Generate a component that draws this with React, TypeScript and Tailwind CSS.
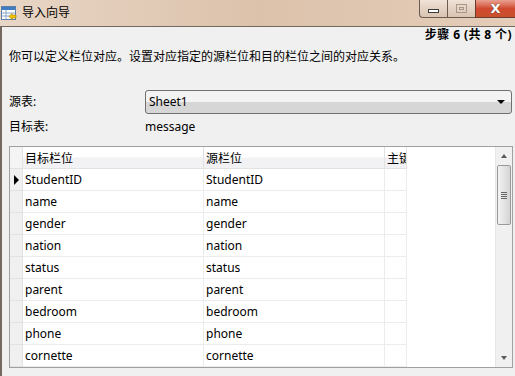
import React from "react";

const rows = [
  "StudentID",
  "name",
  "gender",
  "nation",
  "status",
  "parent",
  "bedroom",
  "phone",
  "cornette",
];

function WizardIcon() {
  return (
    <svg width="16" height="16" viewBox="0 0 16 16" className="shrink-0">
      <rect x="0.5" y="1.5" width="14" height="13" fill="#ffffff" stroke="#5b7ea8" />
      <rect x="1" y="2" width="13" height="3" fill="#3f7cc4" />
      <line x1="1" y1="8" x2="14" y2="8" stroke="#8aa6c8" />
      <line x1="1" y1="11" x2="14" y2="11" stroke="#8aa6c8" />
      <line x1="5" y1="5" x2="5" y2="14" stroke="#8aa6c8" />
      <path d="M8 11.5 L11 8.5 L11 10 L15 10 L15 13 L11 13 L11 14.5 Z" fill="#f2c200" stroke="#a07800" strokeWidth="0.6" />
    </svg>
  );
}

function TitleBar() {
  return (
    <div className="relative flex h-[26px] items-center bg-gradient-to-r from-[#e8d6c6] via-[#dcc2ab] to-[#e4cdb9] pl-[1px]">
      <WizardIcon />
      <span className="ml-[5px] text-[12px] leading-[16px] text-black">导入向导</span>
      <div className="absolute right-0 top-0 flex h-[18px]">
        <div className="flex w-[28px] items-center justify-center rounded-bl-[4px] border border-t-0 border-r-0 border-[#6b5a4e] bg-gradient-to-b from-[#efe2d6] to-[#d9c3b1]">
          <div className="mt-[4px] h-[4px] w-[11px] border border-[#3a3a3a] bg-white"></div>
        </div>
        <div className="flex w-[28px] items-center justify-center border-b border-l border-[#6b5a4e] bg-gradient-to-b from-[#efe2d6] to-[#d9c3b1]">
          <div className="flex h-[9px] w-[11px] items-center justify-center border border-[#a89888]">
            <div className="h-[3px] w-[5px] border border-[#a89888]"></div>
          </div>
        </div>
        <div className="flex w-[40px] items-center justify-center border-b border-l border-[#6b3a30] bg-gradient-to-b from-[#e8a090] via-[#d04a30] to-[#c8502c]">
          <span className="text-[13px] font-bold leading-none text-white [text-shadow:0_0_1px_#333]" style={{ fontFamily: '"DejaVu Sans", sans-serif' }}>
            X
          </span>
        </div>
      </div>
    </div>
  );
}

function Scrollbar() {
  return (
    <div className="flex w-[17px] flex-col border-l border-[#e6e6e6] bg-[#f0f0f0]">
      <div className="flex h-[18px] items-center justify-center">
        <div className="h-0 w-0 border-x-[3px] border-b-[4px] border-x-transparent border-b-[#5a5a5a]"></div>
      </div>
      <div className="mx-[1px] flex h-[60px] items-center justify-center rounded-[2px] border border-[#9a9a9a] bg-gradient-to-r from-[#f2f2f2] via-[#e4e4e4] to-[#d4d4d4]">
        <div className="flex flex-col gap-[1px]">
          <div className="h-[1px] w-[6px] bg-[#666]"></div>
          <div className="h-[1px] w-[6px] bg-[#666]"></div>
          <div className="h-[1px] w-[6px] bg-[#666]"></div>
          <div className="h-[1px] w-[6px] bg-[#666]"></div>
        </div>
      </div>
      <div className="flex-1"></div>
      <div className="flex h-[18px] items-center justify-center">
        <div className="h-0 w-0 border-x-[3px] border-t-[4px] border-x-transparent border-t-[#5a5a5a]"></div>
      </div>
    </div>
  );
}

function Grid() {
  return (
    <div className="mt-[11px] flex h-[222px] w-[504px] border border-[#a0a0a0] bg-white">
      <div className="flex flex-1 flex-col">
        <div className="flex h-[22px]">
          <div className="w-[13px] border-b border-r border-[#e2e2e2] bg-[#f4f4f4]"></div>
          <div className="flex w-[181px] items-center border-b border-r border-[#e2e2e2] bg-gradient-to-b from-white from-45% to-[#f2f2f4] to-55% pl-[2px] pt-[2px]">目标栏位</div>
          <div className="flex w-[181px] items-center border-b border-r border-[#e2e2e2] bg-gradient-to-b from-white from-45% to-[#f2f2f4] to-55% pl-[2px] pt-[2px]">源栏位</div>
          <div className="flex w-[22px] items-center overflow-hidden whitespace-nowrap border-b border-r border-[#e2e2e2] bg-gradient-to-b from-white from-45% to-[#f2f2f4] to-55% pl-[2px] pt-[2px]">主键</div>
        </div>
        {rows.map((r, i) => (
          <div key={r} className="flex h-[22px]">
            <div className="flex w-[13px] items-center justify-center border-b border-r border-[#e2e2e2] bg-[#f0f0f0]">
              {i === 0 && <div className="h-0 w-0 border-y-[5px] border-l-[5px] border-y-transparent border-l-black"></div>}
            </div>
            <div className="flex w-[181px] items-center border-b border-r border-[#ececec] pl-[2px] pt-[1px]">{r}</div>
            <div className="flex w-[181px] items-center border-b border-r border-[#ececec] pl-[2px] pt-[1px]">{r}</div>
            <div className="w-[22px] border-b border-r border-[#ececec]"></div>
          </div>
        ))}
      </div>
      <Scrollbar />
    </div>
  );
}

export default function App() {
  return (
    <div className="h-[376px] w-[515px] overflow-hidden bg-[#f0f0f0] text-[12px] leading-[16px] text-black" style={{ fontFamily: '"Noto Sans", "Noto Sans CJK SC", sans-serif' }}>
      <TitleBar />
      <div className="h-[350px] border-l-[2px] border-t border-[#75685e] pl-[7px]">
        <div className="h-[16px] pr-[3px] text-right font-bold tracking-[0.4px]">步骤 6 (共 8 个)</div>
        <div className="mt-[6px] h-[16px]">你可以定义栏位对应。设置对应指定的源栏位和目的栏位之间的对应关系。</div>
        <div className="mt-[25px] flex h-[24px] items-center">
          <div className="w-[136px]">源表:</div>
          <div className="flex h-[24px] w-[367px] items-center justify-between rounded-[3px] border border-[#707070] bg-gradient-to-b from-[#f3f3f3] from-50% to-[#d6d6d6] to-50% pl-[3px] pr-[6px]">
            <span>Sheet1</span>
            <div className="h-0 w-0 border-x-[4px] border-t-[4px] border-x-transparent border-t-black"></div>
          </div>
        </div>
        <div className="mt-[5px] flex h-[16px]">
          <div className="w-[136px]">目标表:</div>
          <div>message</div>
        </div>
        <Grid />
      </div>
    </div>
  );
}
